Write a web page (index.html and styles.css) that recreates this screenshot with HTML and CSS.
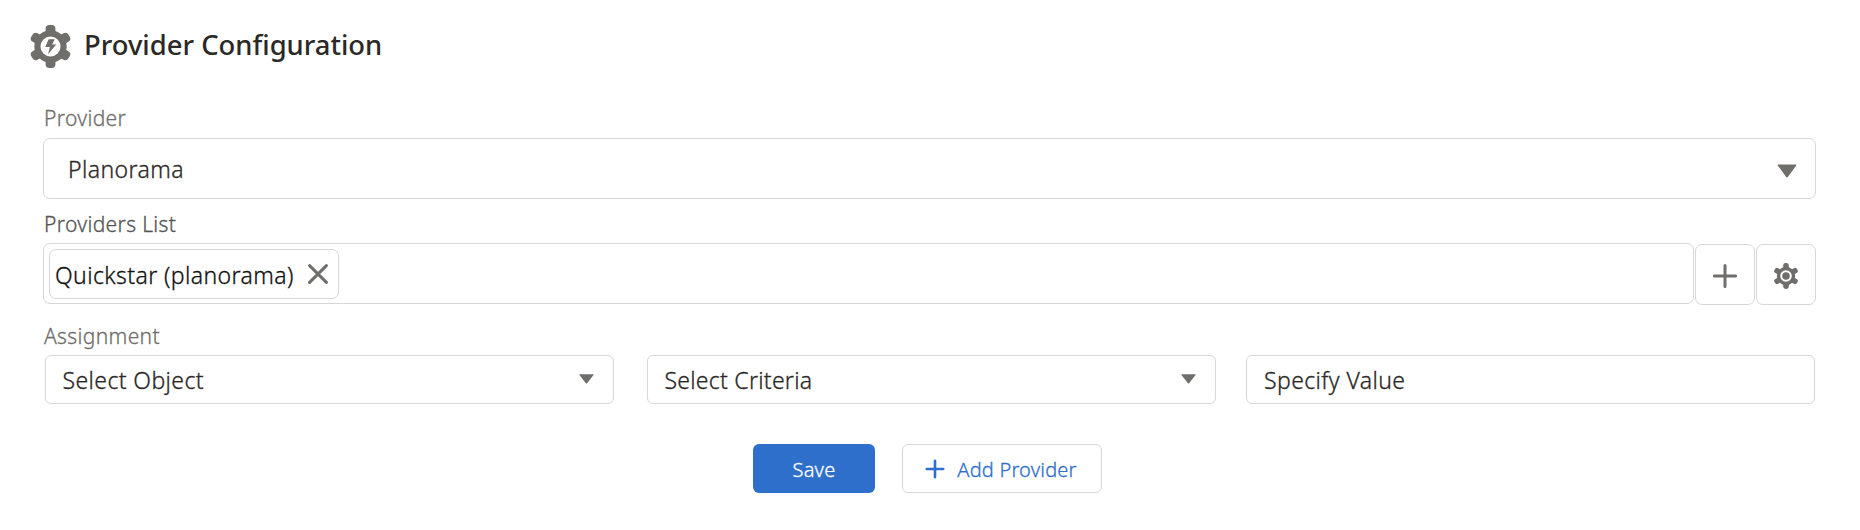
FILE: index.html
```html
<!DOCTYPE html>
<html lang="en">
<head>
<meta charset="utf-8">
<title>Provider Configuration</title>
<link rel="stylesheet" href="styles.css">
</head>
<body>
<main class="panel">
  <header class="header">
    <svg class="header-icon" viewBox="0 0 40 44">
      <g fill="#706e6b">
        <circle cx="20" cy="22" r="15.8"/>
        <rect x="15.2" y="1" width="9.6" height="42" rx="3.6"/>
        <rect x="15.2" y="1" width="9.6" height="42" rx="3.6" transform="rotate(60 20 22)"/>
        <rect x="15.2" y="1" width="9.6" height="42" rx="3.6" transform="rotate(120 20 22)"/>
      </g>
      <circle cx="20" cy="22" r="9.8" fill="#fff"/>
      <path d="M18.2 15h6l-2.6 5h4l-8 9.6 1.8-7h-4.6z" fill="#706e6b"/>
    </svg>
    <h1 class="title">Provider Configuration</h1>
  </header>

  <label class="label label-provider">Provider</label>
  <div class="select select-large">
    <span class="text-planorama">Planorama</span>
    <svg class="caret-large" viewBox="0 0 20 14"><path d="M.8.5h18.4q.6.2.2.8L10.8 13q-.8.8-1.6 0L.6 1.3Q.2.7.8.5z" fill="#706e6b"/></svg>
  </div>

  <label class="label label-list">Providers List</label>
  <div class="list-row">
    <div class="tags">
      <span class="tag">
        <span class="text-tag">Quickstar (planorama)</span>
        <svg class="close" viewBox="0 0 20 20"><path d="M1.6 1.6l16.8 16.8M18.4 1.6L1.6 18.4" stroke="#706e6b" stroke-width="3" stroke-linecap="round"/></svg>
      </span>
    </div>
    <button class="icon-button" aria-label="Add">
      <svg class="icon" viewBox="0 0 26 26"><path d="M13 2.4v21.2M2.4 13h21.2" stroke="#706e6b" stroke-width="3" stroke-linecap="round"/></svg>
    </button>
    <button class="icon-button" aria-label="Settings">
      <svg class="icon" viewBox="0 0 26 26">
        <g fill="#706e6b">
          <circle cx="13" cy="13" r="9.2"/>
          <rect x="10.2" y="0" width="5.6" height="26" rx="2.4"/>
          <rect x="10.2" y="0" width="5.6" height="26" rx="2.4" transform="rotate(60 13 13)"/>
          <rect x="10.2" y="0" width="5.6" height="26" rx="2.4" transform="rotate(120 13 13)"/>
        </g>
        <circle cx="13" cy="13" r="4.8" fill="#706e6b" stroke="#fff" stroke-width="2"/>
      </svg>
    </button>
  </div>

  <label class="label label-assignment">Assignment</label>
  <div class="assignment">
    <div class="select">
      <span class="text-object">Select Object</span>
      <svg class="caret" viewBox="0 0 20 14" preserveAspectRatio="none"><path d="M.8.5h18.4q.6.2.2.8L10.8 13q-.8.8-1.6 0L.6 1.3Q.2.7.8.5z" fill="#706e6b"/></svg>
    </div>
    <div class="select">
      <span class="text-criteria">Select Criteria</span>
      <svg class="caret" viewBox="0 0 20 14" preserveAspectRatio="none"><path d="M.8.5h18.4q.6.2.2.8L10.8 13q-.8.8-1.6 0L.6 1.3Q.2.7.8.5z" fill="#706e6b"/></svg>
    </div>
    <div class="select"><span class="text-value">Specify Value</span></div>
  </div>

  <footer class="actions">
    <button class="button save"><span class="text-save">Save</span></button>
    <button class="button add">
      <svg class="add-icon" viewBox="0 0 20 20"><path d="M10 1.8v16.4M1.8 10h16.4" stroke="#2e6fcc" stroke-width="2.6" stroke-linecap="round"/></svg>
      <span class="text-add">Add Provider</span>
    </button>
  </footer>
</main>
</body>
</html>
```
FILE: styles.css
```css
* { box-sizing: border-box; }
body {
  margin: 0;
  background: #fff;
  color: #2b2826;
  font-family: "Noto Sans", "Open Sans", sans-serif;
  font-weight: 300;
  -webkit-text-stroke: .3px;
}
svg { display: block; flex: none; fill: none; }
button { font-family: inherit; font-weight: inherit; padding: 0; }
.panel { padding: 24px 44.5px 0 43px; height: 530px; overflow: hidden; }
.header { display: flex; height: 46px; margin-left: -13px; gap: 13px; }
.header-icon { width: 41px; height: 45px; }
.title { margin: 0; color: #2b2826; font-size: 27.4px; line-height: 42px; font-weight: 550; -webkit-text-stroke: 0; white-space: nowrap; }
.label { display: block; color: #706e6b; font-size: 21px; line-height: 30px; letter-spacing: .35px; padding-left: 1px; white-space: nowrap; }
.label-provider { margin-top: 33px; height: 35px; }
.label-list { margin-top: 10px; height: 34px; color: #555; }
.label-assignment { margin-top: 16px; height: 34px; }
.select {
  display: flex;
  align-items: center;
  justify-content: space-between;
  height: 49px;
  padding: 0 19px 0 17px;
  border: 1.5px solid #d8d7d6;
  border-radius: 6px;
  font-size: 23px;
  line-height: 32px;
  letter-spacing: .4px;
  white-space: nowrap;
}
.select-large { height: 61px; padding: 0 18px 0 24px; border-radius: 7px; }
.text-planorama { letter-spacing: .4px; }
.text-criteria { letter-spacing: .25px; }
.caret-large { width: 20px; height: 14px; margin-top: 4px; }
.caret { width: 15px; height: 10px; margin-top: -2px; }
.list-row { display: flex; align-items: flex-start; gap: 1px; }
.tags { flex: 1; height: 61px; padding: 5px; border: 1.5px solid #d8d7d6; border-radius: 7px; }
.tag {
  display: flex;
  align-items: center;
  justify-content: space-between;
  width: 290px;
  height: 50px;
  padding: 0 10px 0 5px;
  border: 1.5px solid #d8d7d6;
  border-radius: 7px;
  color: #111;
  font-size: 23px;
  line-height: 32px;
  letter-spacing: .4px;
  white-space: nowrap;
}
.text-tag { padding-top: 2px; }
.close { width: 20px; height: 20px; margin-top: -1px; }
.icon-button {
  display: flex;
  align-items: center;
  justify-content: center;
  width: 60px;
  height: 61px;
  margin-top: 1px;
  background: #fff;
  border: 1.5px solid #d8d7d6;
  border-radius: 7px;
}
.icon { width: 26px; height: 26px; margin-top: 2px; }
.assignment { display: grid; grid-template-columns: 602px 599.5px 569px; padding-left: 1.5px; }
.assignment .select { width: 569px; }
.actions { display: flex; margin: 40px 0 0 710px; gap: 27px; }
.button { display: flex; align-items: center; justify-content: center; height: 49px; border-radius: 6px; font-size: 20px; line-height: 28px; letter-spacing: .2px; white-space: nowrap; }
.button span { padding-top: 2px; }
.save { width: 122px; border: 0; background: #2e6fcc; color: #fff; }
.add { width: 200px; border: 1.5px solid #d8d7d6; background: #fff; color: #2e6fcc; gap: 12px; padding-right: 2px; }
.add-icon { width: 20px; height: 20px; }
```
